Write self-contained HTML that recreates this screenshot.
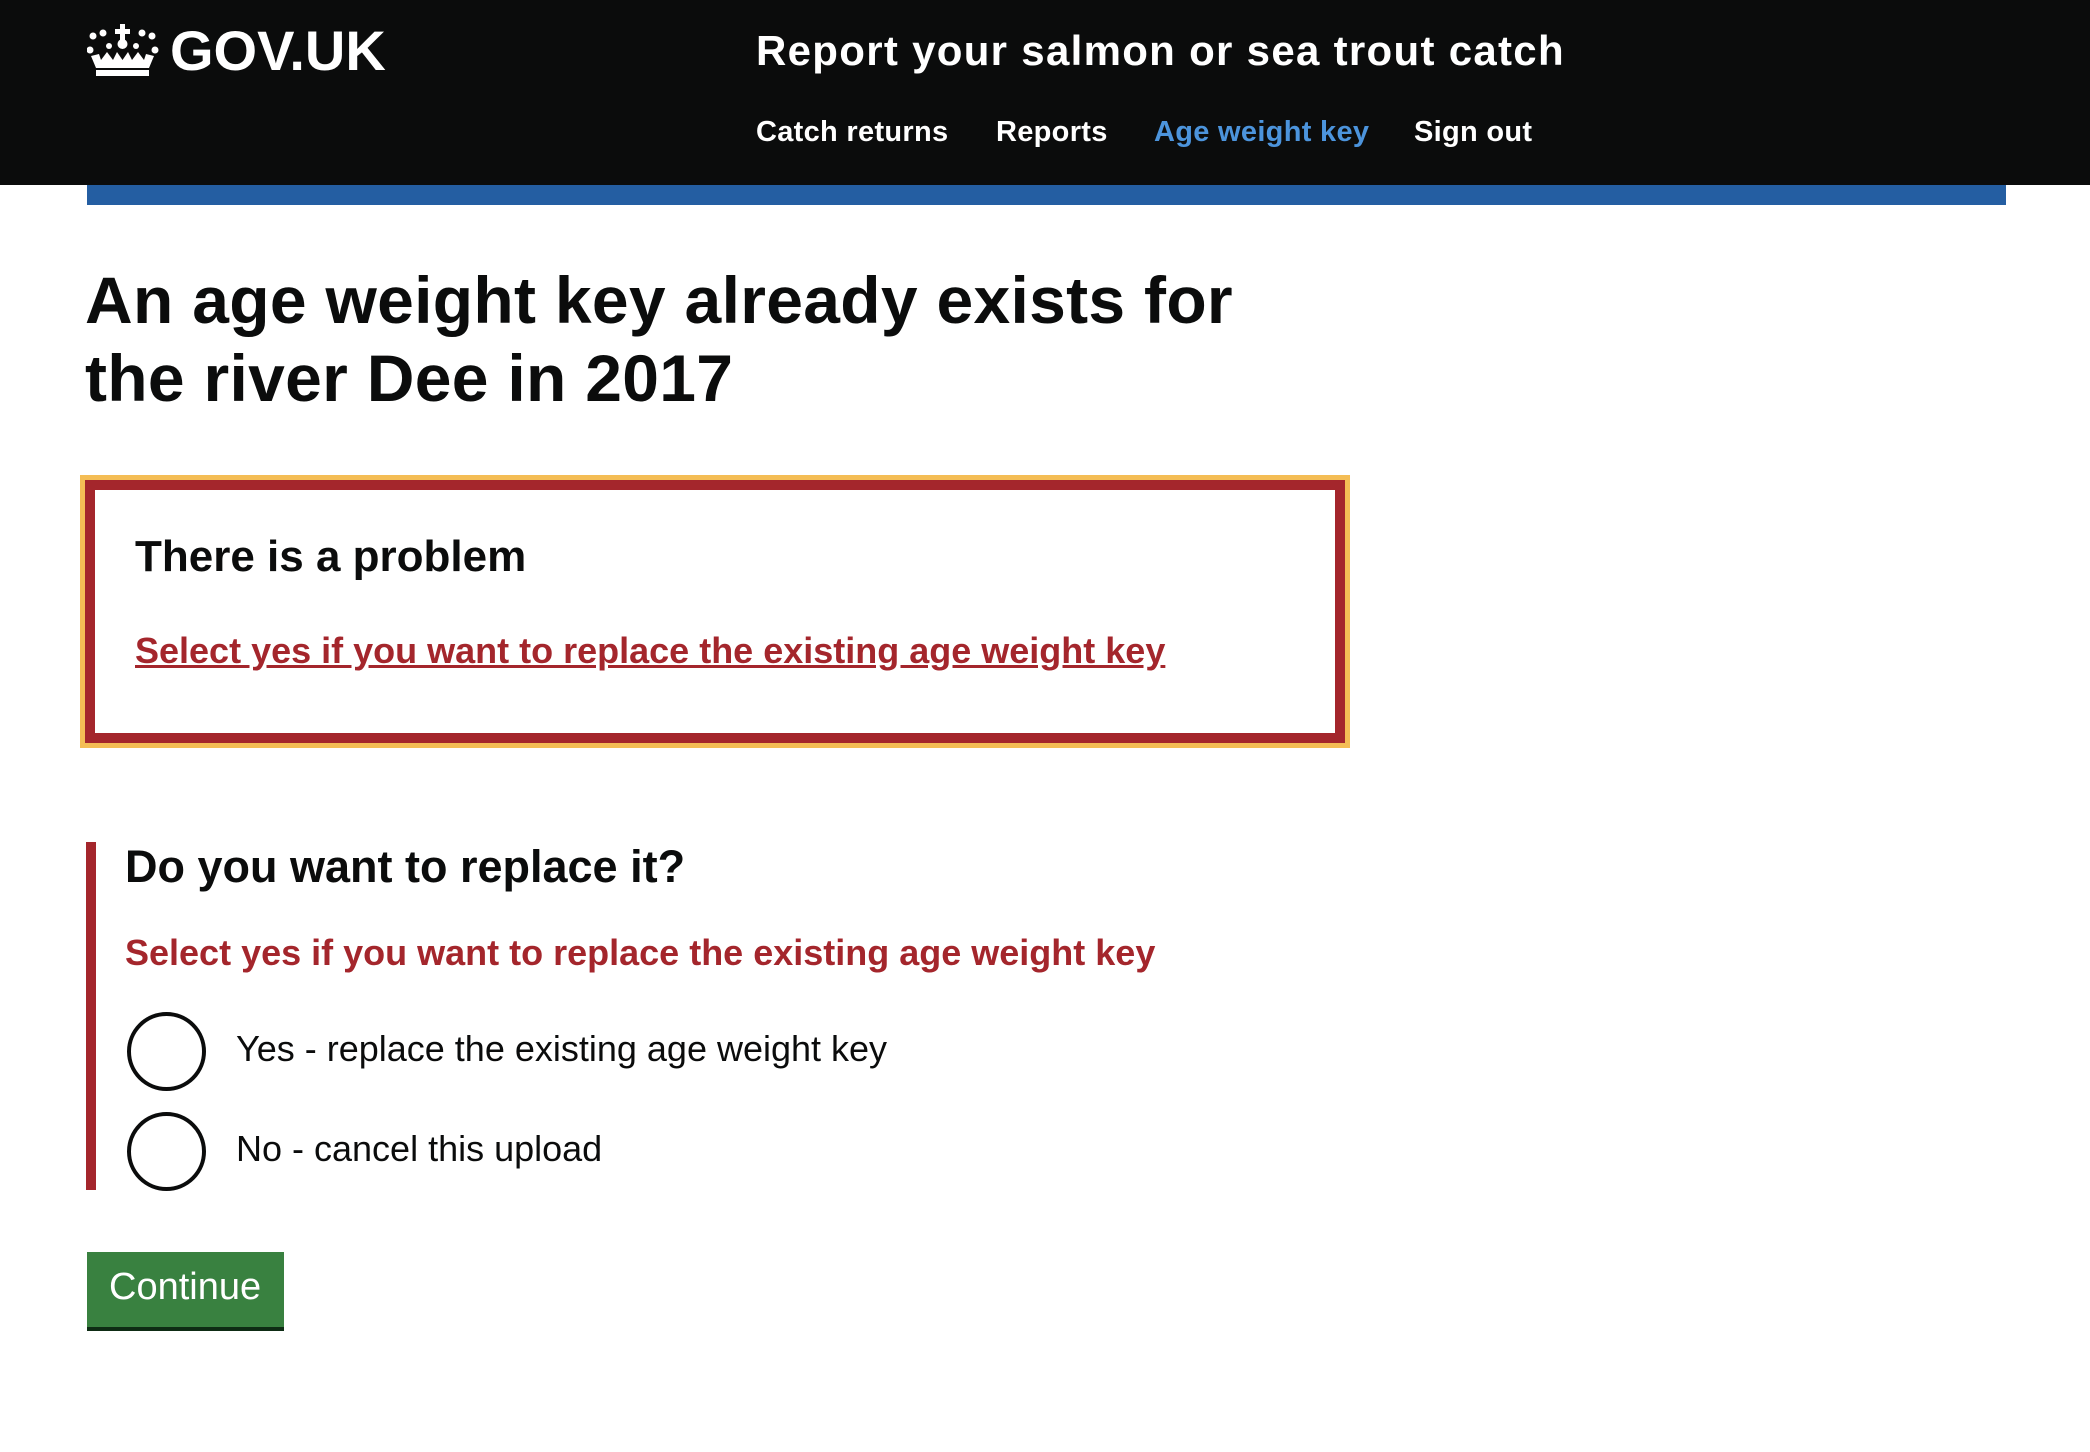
<!DOCTYPE html>
<html><head><meta charset="utf-8"><style>
*{margin:0;padding:0;box-sizing:border-box}
body{width:2090px;height:1452px;background:#fff;font-family:"Liberation Sans",Arial,sans-serif;color:#0b0c0c;position:relative;overflow:hidden}
.abs{position:absolute;white-space:nowrap}
.hdr{position:absolute;left:0;top:0;width:2090px;height:185px;background:#0b0c0c}
.blue{position:absolute;left:87px;top:185px;width:1919px;height:20px;background:#245ea2}
.b{font-weight:bold}
</style></head><body>
<div class="hdr"></div>
<svg class="abs" style="left:87px;top:24px" width="72" height="54" viewBox="0 0 72 54">
<g fill="#fff">
<rect x="33" y="0" width="5" height="16"/><rect x="28" y="5" width="15" height="5"/>
<circle cx="35.5" cy="20" r="5"/>
<circle cx="6" cy="12" r="3.5"/><circle cx="16" cy="9" r="3.5"/><circle cx="55" cy="9" r="3.5"/><circle cx="65" cy="12" r="3.5"/>
<circle cx="3" cy="26" r="3.5"/><circle cx="68" cy="26" r="3.5"/><circle cx="22" cy="22" r="3"/><circle cx="49" cy="22" r="3"/>
<path d="M4 32 L12 30 L14 36 L20 28 L26 36 L30 28 L35.5 36 L41 28 L45 36 L51 28 L57 36 L59 30 L67 32 L62 44 L9 44 Z"/>
<rect x="9" y="46" width="53" height="6"/>
</g></svg>
<div class="abs b" style="left:170px;top:18px;font-size:56px;color:#fff">GOV.UK</div>
<div class="abs b" style="left:756px;top:27px;font-size:42px;color:#fff;letter-spacing:1.3px">Report your salmon or sea trout catch</div>
<div class="abs b" style="left:756px;top:116px;font-size:29px;color:#fff;letter-spacing:0.3px">Catch returns</div>
<div class="abs b" style="left:996px;top:116px;font-size:29px;color:#fff;letter-spacing:0.3px">Reports</div>
<div class="abs b" style="left:1154px;top:116px;font-size:29px;color:#4c94dc;letter-spacing:0.3px">Age weight key</div>
<div class="abs b" style="left:1414px;top:116px;font-size:29px;color:#fff;letter-spacing:0.3px">Sign out</div>
<div class="blue"></div>
<div class="abs b" style="left:85px;top:261px;font-size:66px;line-height:78px;letter-spacing:0.3px">An age weight key already exists for<br>the river Dee in 2017</div>
<div class="abs" style="left:80px;top:475px;width:1270px;height:273px;border:5px solid #f4bd55"></div>
<div class="abs" style="left:85px;top:480px;width:1260px;height:263px;border:10px solid #a4262c"></div>
<div class="abs b" style="left:135px;top:532px;font-size:44px">There is a problem</div>
<div class="abs b" style="left:135px;top:630px;font-size:36px;color:#a4262c;text-decoration:underline">Select yes if you want to replace the existing age weight key</div>
<div class="abs" style="left:86px;top:842px;width:10px;height:348px;background:#a4262c"></div>
<div class="abs b" style="left:125px;top:841px;font-size:45px">Do you want to replace it?</div>
<div class="abs b" style="left:125px;top:932px;font-size:36px;color:#a4262c">Select yes if you want to replace the existing age weight key</div>
<div class="abs" style="left:127px;top:1012px;width:79px;height:79px;border:4px solid #0b0c0c;border-radius:50%"></div>
<div class="abs" style="left:127px;top:1112px;width:79px;height:79px;border:4px solid #0b0c0c;border-radius:50%"></div>
<div class="abs" style="left:236px;top:1028px;font-size:36px">Yes - replace the existing age weight key</div>
<div class="abs" style="left:236px;top:1128px;font-size:36px">No - cancel this upload</div>
<div class="abs" style="left:87px;top:1252px;width:197px;height:79px;background:#398140;border-bottom:4px solid #0e2c14"></div>
<div class="abs" style="left:109px;top:1266px;font-size:38px;color:#fff">Continue</div>
</body></html>
